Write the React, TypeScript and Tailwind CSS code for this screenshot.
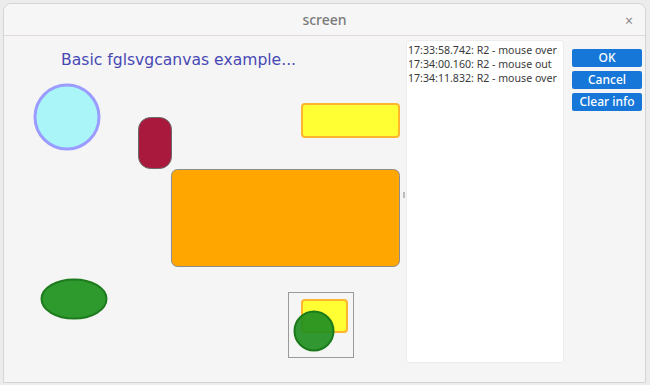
const logLines = [
  '17:33:58.742: R2 - mouse over',
  '17:34:00.160: R2 - mouse out',
  '17:34:11.832: R2 - mouse over',
];

function Canvas() {
  return (
    <svg width={399} height={345} viewBox="4 36 399 345" className="block">
      <text x={61} y={65} fill="#4848b4" fontSize={15.6} fontFamily="'DejaVu Sans', 'Noto Sans', sans-serif">
        Basic fglsvgcanvas example...
      </text>
      <circle cx={67} cy={117} r={32} fill="#aaf5f8" stroke="#9a9cff" strokeWidth={3} />
      <rect x={138.5} y={117.5} width={33} height={51} rx={12} fill="#a8193d" stroke="#6b6b6b" strokeWidth={1} />
      <rect x={302} y={104} width={97} height={33} rx={3} fill="#ffff33" stroke="#ffb52e" strokeWidth={2} />
      <rect x={171.5} y={169.5} width={228} height={97} rx={6} fill="#ffa600" stroke="#8d8d8d" strokeWidth={1} />
      <ellipse cx={74} cy={299} rx={32.5} ry={19.5} fill="#2e9a2e" stroke="#1d7a1d" strokeWidth={2} />
      <rect x={288.5} y={292.5} width={65} height={65} fill="none" stroke="#9a9a9a" strokeWidth={1} />
      <rect x={302} y={300} width={45} height={32} rx={3} fill="#ffff33" stroke="#ffb52e" strokeWidth={2} />
      <circle cx={314} cy={331} r={19.5} fill="#1f8f1f" fillOpacity={0.92} stroke="#1a7a1a" strokeWidth={2} />
    </svg>
  );
}

export default function App() {
  return (
    <div className="w-[650px] h-[385px] bg-[#ececec] p-[3px]" style={{ fontFamily: "'Noto Sans', 'Open Sans', sans-serif" }}>
      <div className="w-[643px] h-[380px] flex flex-col rounded-t-[8px] border border-[#d4d4d4] bg-[#f5f5f5] overflow-hidden">
        {/* title bar */}
        <div className="h-[32px] flex-none flex items-center justify-center relative border-b border-[#e2d9de] bg-[#f6f6f6]">
          <span className="text-[14px] text-[#7a7a7a] font-medium">screen</span>
          <span className="absolute right-[12px] top-[6px] text-[14px] text-[#8a8a8a]">×</span>
        </div>
        {/* body */}
        <div className="flex flex-1">
          <div className="relative flex-none w-[399px]">
            <Canvas />
            <span className="absolute right-[-2px] top-[156px] w-[2px] h-[6px] bg-[#bbbbbb]" />
          </div>
          <div className="flex-none w-[158px] h-[323px] ml-[3px] mt-[4px] bg-white border border-[#ececec] rounded-[3px] px-[1px] pt-[2px]">
            {logLines.map((l) => (
              <div key={l} className="text-[10.6px] leading-[14px] text-[#3a3a3a] whitespace-nowrap">
                {l}
              </div>
            ))}
          </div>
          <div className="flex-none w-[70px] ml-[8px] mt-[13px] flex flex-col gap-[4px]">
            {['OK', 'Cancel', 'Clear info'].map((b) => (
              <button
                key={b}
                className="h-[18px] w-full rounded-[2px] bg-[#1677d9] text-white text-[12px] font-medium leading-[18px]"
              >
                {b}
              </button>
            ))}
          </div>
        </div>
      </div>
    </div>
  );
}
